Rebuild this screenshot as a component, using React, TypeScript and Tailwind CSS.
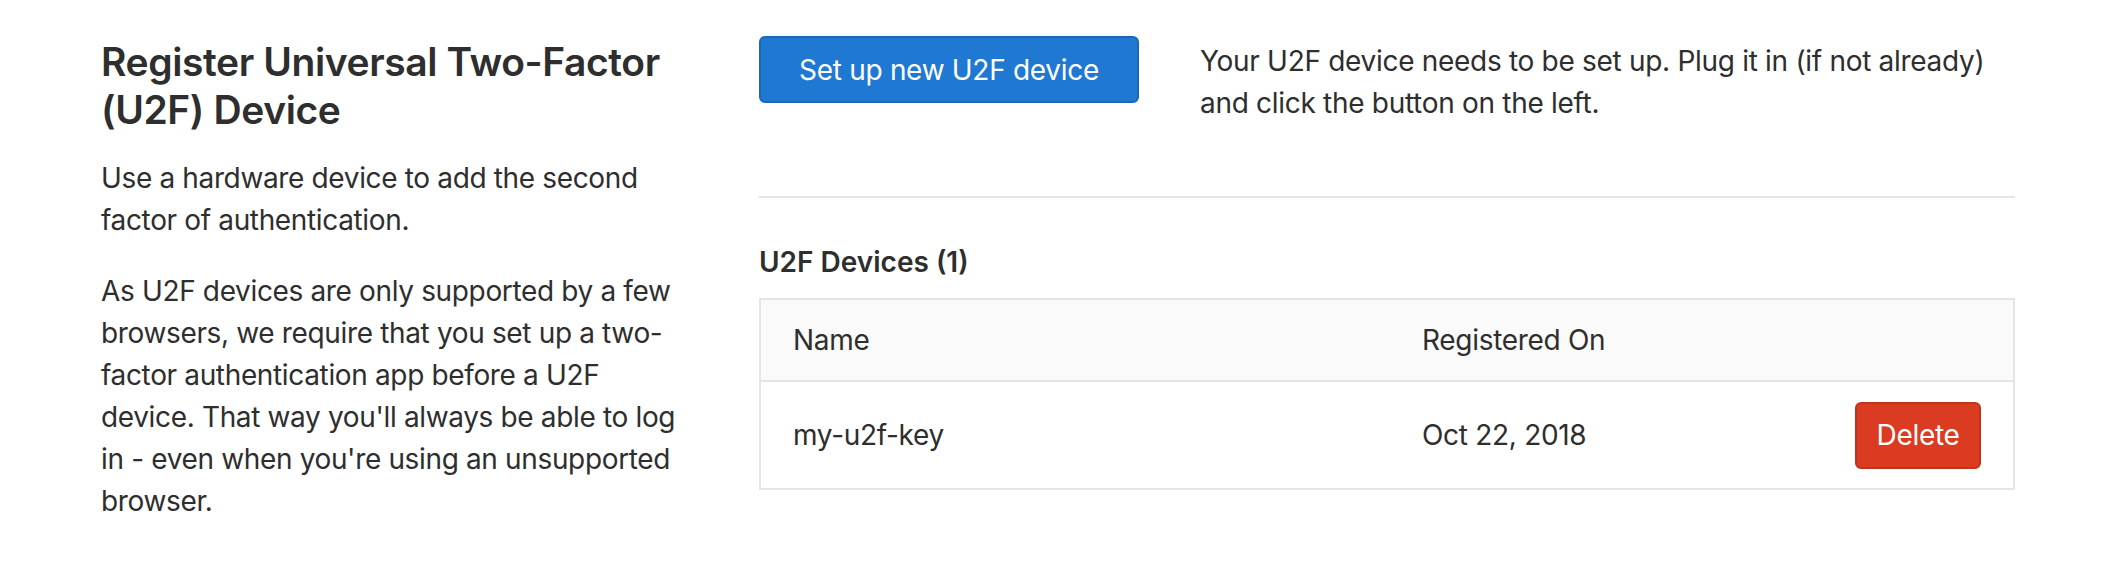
const DEVICES = [{ name: "my-u2f-key", registeredOn: "Oct 22, 2018" }]

export default function App() {
  return (
    <main className="min-h-screen bg-white font-[Inter,sans-serif] text-[#2e2e2e]">
      <div className="grid grid-cols-[598px_1fr] gap-[60px] px-[101px] pt-[36px]">
        <section className="pt-[2px]">
          <h4 className="mb-[23px] text-[39px] font-semibold leading-[48px] tracking-[-0.4px]">
            Register Universal Two-Factor (U2F) Device
          </h4>
          <p className="mb-[29px] text-[28px] leading-[42px] tracking-[-0.35px]">
            Use a hardware device to add the second factor of authentication.
          </p>
          <p className="text-[28px] leading-[42px] tracking-[-0.35px]">
            As U2F devices are only supported by a few browsers, we require that you set up a
            two-factor authentication app before a U2F device. That way you'll always be able to
            log in - even when you're using an unsupported browser.
          </p>
        </section>

        <section>
          <div className="flex items-start gap-[61px]">
            <button className="h-[67px] w-[380px] shrink-0 rounded-[6px] border-2 border-[#1b69b6] bg-[#1f78d1] text-[28px] tracking-[-0.3px] text-white">
              Set up new U2F device
            </button>
            <p className="pt-[4px] text-[28px] leading-[42px] tracking-[-0.3px]">
              Your U2F device needs to be set up. Plug it in (if not already) and click the button
              on the left.
            </p>
          </div>

          <hr className="mt-[72px] border-t-2 border-[#e5e5e5]" />

          <h5 className="mt-[43px] mb-[15px] text-[28px] font-semibold leading-[42px]">
            U2F Devices ({DEVICES.length})
          </h5>

          <div className="border-2 border-[#e5e5e5] text-[28px] leading-[42px] tracking-[-0.3px]">
            <div className="grid h-[82px] grid-cols-[629px_1fr] items-center border-b-2 border-[#e5e5e5] bg-[#fafafa] px-[32px]">
              <span>Name</span>
              <span>Registered On</span>
            </div>
            {DEVICES.map((device) => (
              <div
                key={device.name}
                className="grid h-[106px] grid-cols-[629px_1fr_auto] items-center px-[32px]"
              >
                <span>{device.name}</span>
                <span>{device.registeredOn}</span>
                <button className="h-[67px] w-[126px] rounded-[6px] border-2 border-[#c0341d] bg-[#db3b21] text-white">
                  Delete
                </button>
              </div>
            ))}
          </div>
        </section>
      </div>
    </main>
  )
}
